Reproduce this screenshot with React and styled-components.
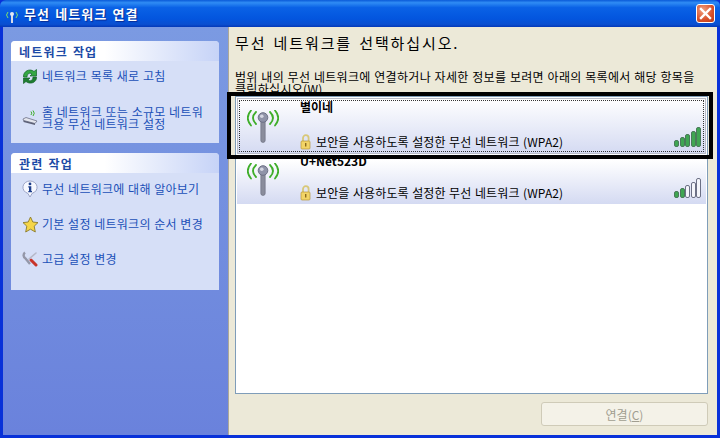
import React from "react";
import styled, { createGlobalStyle } from "styled-components";

const GlobalStyle = createGlobalStyle`
  html, body {
    margin: 0;
    padding: 0;
    background: #0831d9;
  }
  * {
    box-sizing: border-box;
  }
`;

const font = `"Noto Sans CJK KR", "Liberation Sans", sans-serif`;

const networks = [
  { id: "star", name: "별이네", level: 5, selected: true },
  { id: "unet", name: "U+Net523D", level: 2, selected: false },
];

const AntennaIcon = () => (
  <svg width="32" height="33" viewBox="0 0 32 33">
    <g fill="none" stroke="#3fae2a" strokeWidth="1.8" strokeLinecap="round">
      <path d="M9 2 Q3 8 9 14" />
      <path d="M4 0.5 Q-2.5 8 4 15.5" />
      <path d="M23 2 Q29 8 23 14" />
      <path d="M28 0.5 Q34.5 8 28 15.5" />
    </g>
    <rect x="13.8" y="9" width="4.4" height="23.5" rx="2.2" fill="#8a8d9c" stroke="#666a7c" strokeWidth="0.6" />
    <circle cx="16" cy="7.5" r="4.8" fill="#8f93a8" stroke="#6c7085" />
    <circle cx="14.8" cy="6.2" r="1.8" fill="#d4d6e2" />
  </svg>
);

const LockIcon = () => (
  <svg width="11" height="16" viewBox="0 0 11 16">
    <path d="M3 7 V4 a2.8 2.8 0 0 1 5.6 0 V7" fill="none" stroke="#d8c878" strokeWidth="1.8" />
    <rect x="1" y="7" width="9" height="8" rx="1" fill="#f2d466" stroke="#b8963a" strokeWidth="0.7" />
    <rect x="5" y="9" width="1.4" height="3.5" fill="#8a6a1e" />
  </svg>
);

const RefreshIcon = () => (
  <svg width="16" height="17" viewBox="0 0 16 17">
    <path d="M1.5 9 C1 3 8 0 12 3.5 L14.5 1.5 V8 H8 L10 6 C7.5 4 5 6 5 9 Z" fill="#34a844" stroke="#14622a" strokeWidth="0.7" />
    <path d="M14.5 9 C15 14.5 8 17 4 13.5 L1.5 15.5 V10 H8 L6 12 C8.5 14 11 12 11 9 Z" fill="#1d7d30" stroke="#14622a" strokeWidth="0.7" />
  </svg>
);

const HomeWirelessIcon = () => (
  <svg width="17" height="16" viewBox="0 0 17 16">
    <path d="M9 5 Q10.5 3.2 9 1.5" fill="none" stroke="#3fae2a" strokeWidth="1" />
    <path d="M11 6 Q13.5 3.2 11 0.5" fill="none" stroke="#3fae2a" strokeWidth="1" />
    <path d="M1 9 L4 7.5 L15 11 L13 13.5 L1.5 10.5 Z" fill="#e4e6ee" stroke="#6c7085" strokeWidth="0.8" />
    <path d="M1.5 10.5 L13 13.5 L13 15 L1.5 12 Z" fill="#5c6076" />
  </svg>
);

const InfoIcon = () => (
  <svg width="16" height="18" viewBox="0 0 16 18">
    <path d="M8 1 a7 6.3 0 0 0 -2.2 12.3 L8 17 L10.2 13.3 A7 6.3 0 0 0 8 1 Z" fill="#f6f8ff" stroke="#8a93b8" strokeWidth="0.8" />
    <circle cx="8" cy="3.9" r="1.4" fill="#1e3f8c" />
    <path d="M6.3 6.2 H9.3 V11 H10 V12.2 H6.3 V11 H7 V7.4 H6.3 Z" fill="#1e3f8c" />
  </svg>
);

const StarIcon = () => (
  <svg width="17" height="17" viewBox="0 0 17 17">
    <path d="M8.5 1 L10.8 6 L16 6.6 L12.2 10.2 L13.3 16 L8.5 13.2 L3.7 16 L4.8 10.2 L1 6.6 L6.2 6 Z" fill="#f5d548" stroke="#8a7a2a" strokeWidth="0.9" />
  </svg>
);

const ToolIcon = () => (
  <svg width="17" height="16" viewBox="0 0 17 16">
    <path d="M9 9 L14 14" stroke="#c8342a" strokeWidth="3" strokeLinecap="round" />
    <path d="M3 1.5 a3.6 3.6 0 0 0 0.5 6 L8 13" fill="none" stroke="#9497a8" strokeWidth="2.4" />
    <path d="M7 8 L14 2" stroke="#b6b9c8" strokeWidth="1.6" strokeLinecap="round" />
  </svg>
);

const SignalBars = ({ level }) => (
  <Bars>
    {[7, 10, 13, 16, 20].map((height, index) => (
      <Bar key={height} $height={height} $on={index < level} />
    ))}
  </Bars>
);

const App = () => {
  return (
    <Window>
      <GlobalStyle />
      <TitleBar>
        <TitleIcon>
          <svg width="16" height="16" viewBox="0 0 16 16">
            <g fill="none" stroke="#7fe06a" strokeWidth="1">
              <path d="M4 3 Q1 6 4 9" />
              <path d="M12 3 Q15 6 12 9" />
            </g>
            <rect x="7" y="5" width="2" height="9" fill="#d8dce8" />
            <circle cx="8" cy="5" r="2" fill="#e4e8f2" />
          </svg>
        </TitleIcon>
        <Title>무선 네트워크 연결</Title>
        <CloseButton>
          <svg width="13" height="13" viewBox="0 0 13 13">
            <path d="M2 2 L11 11 M11 2 L2 11" stroke="#fff" strokeWidth="2.4" strokeLinecap="square" />
          </svg>
        </CloseButton>
      </TitleBar>
      <Body>
        <Sidebar>
          <TaskGroup $height={102}>
            <GroupHeader>네트워크 작업</GroupHeader>
            <TaskList $gap={21} $top={6}>
              <Task>
                <TaskIcon><RefreshIcon /></TaskIcon>
                <TaskLabel>네트워크 목록 새로 고침</TaskLabel>
              </Task>
              <Task>
                <TaskIcon><HomeWirelessIcon /></TaskIcon>
                <TaskLabel>홈 네트워크 또는 소규모 네트워크용 무선 네트워크 설정</TaskLabel>
              </Task>
            </TaskList>
          </TaskGroup>
          <TaskGroup $height={137}>
            <GroupHeader>관련 작업</GroupHeader>
            <TaskList $gap={17} $top={7}>
              <Task>
                <TaskIcon><InfoIcon /></TaskIcon>
                <TaskLabel>무선 네트워크에 대해 알아보기</TaskLabel>
              </Task>
              <Task>
                <TaskIcon><StarIcon /></TaskIcon>
                <TaskLabel>기본 설정 네트워크의 순서 변경</TaskLabel>
              </Task>
              <Task>
                <TaskIcon><ToolIcon /></TaskIcon>
                <TaskLabel>고급 설정 변경</TaskLabel>
              </Task>
            </TaskList>
          </TaskGroup>
        </Sidebar>
        <Main>
          <Heading>무선 네트워크를 선택하십시오.</Heading>
          <Description>
            범위 내의 무선 네트워크에 연결하거나 자세한 정보를 보려면 아래의 목록에서 해당 항목을
            <br />
            클릭하십시오(W).
          </Description>
          <NetworkList>
            <Highlight />
            {networks.map((network) => (
              <NetworkRow key={network.id} $selected={network.selected}>
                <AntennaSlot $selected={network.selected}><AntennaIcon /></AntennaSlot>
                <NetworkInfo>
                  <NetworkName $selected={network.selected}>{network.name}</NetworkName>
                  <NetworkStatus>
                    <LockIcon />
                    <span>보안을 사용하도록 설정한 무선 네트워크 (WPA2)</span>
                  </NetworkStatus>
                </NetworkInfo>
                <SignalBars level={network.level} />
              </NetworkRow>
            ))}
          </NetworkList>
          <Footer>
            <ConnectButton disabled>연결(<u>C</u>)</ConnectButton>
          </Footer>
        </Main>
      </Body>
    </Window>
  );
};

const Window = styled.div`
  width: 720px;
  height: 438px;
  display: flex;
  flex-direction: column;
  overflow: hidden;
  background: #0831d9;
  font-family: ${font};
`;

const TitleBar = styled.div`
  height: 27px;
  flex: none;
  display: flex;
  align-items: center;
  padding: 0 5px 0 4px;
  border-radius: 6px 6px 0 0;
  background: linear-gradient(180deg, #0a5ad8 0%, #2f8cf4 10%, #0a62e6 28%, #0355de 70%, #0a4fd0 90%, #0338b8 100%);
`;

const TitleIcon = styled.div`
  width: 17px;
  height: 16px;
  margin-right: 3px;
`;

const Title = styled.div`
  flex: 1;
  color: #fff;
  font-size: 13px;
  font-weight: 700;
  letter-spacing: 1.1px;
  word-spacing: 1px;
  text-shadow: 1px 1px 1px #0a2a90;
`;

const CloseButton = styled.div`
  width: 19px;
  height: 19px;
  display: flex;
  align-items: center;
  justify-content: center;
  border: 1px solid #fff;
  border-radius: 3px;
  background: radial-gradient(circle at 35% 30%, #f0a080, #d8502a 60%, #b83a18);
`;

const Body = styled.div`
  flex: 1;
  display: flex;
  margin: 0 3px 3px 3px;
  min-height: 0;
`;

const Sidebar = styled.div`
  width: 225px;
  flex: none;
  display: flex;
  flex-direction: column;
  gap: 10px;
  padding: 14px 9px 0 8px;
  background: linear-gradient(180deg, #7b9ae2 0%, #6a82dc 100%);
`;

const TaskGroup = styled.section`
  height: ${(p) => p.$height}px;
  border-radius: 4px 4px 0 0;
  background: #d6dff7;
`;

const GroupHeader = styled.div`
  height: 20px;
  display: flex;
  align-items: center;
  padding-left: 8px;
  border-radius: 4px 4px 0 0;
  background: linear-gradient(90deg, #fff 0%, #fff 45%, #c6d3f7 100%);
  color: #1c4aa6;
  font-size: 12px;
  font-weight: 700;
  letter-spacing: 1.2px;
  word-spacing: 1px;
`;

const TaskList = styled.div`
  display: flex;
  flex-direction: column;
  gap: ${(p) => p.$gap}px;
  padding: ${(p) => p.$top}px 8px 0 10px;
`;

const Task = styled.div`
  display: flex;
  align-items: center;
  gap: 3px;
`;

const TaskIcon = styled.div`
  width: 18px;
  height: 18px;
  flex: none;
  display: flex;
  align-items: center;
  justify-content: center;
`;

const TaskLabel = styled.div`
  max-width: 166px;
  color: #2050b8;
  font-size: 12px;
  line-height: 12px;
  letter-spacing: 0.25px;
  word-spacing: 0.6px;
  word-break: break-all;
`;

const Main = styled.div`
  flex: 1;
  display: flex;
  flex-direction: column;
  padding: 0 9px 0 6px;
  border-left: 1px solid #aca899;
  background: #ece9d8;
`;

const Heading = styled.h1`
  margin: 6px 0 0 0;
  height: 20px;
  font-size: 15px;
  line-height: 20px;
  font-weight: 400;
  letter-spacing: 1.88px;
  word-spacing: 2px;
  color: #000;
`;

const Description = styled.p`
  margin: 18px 0 0 0;
  height: 24px;
  font-size: 12px;
  line-height: 12px;
  letter-spacing: 0.31px;
  word-spacing: 0.6px;
  color: #000;
  white-space: nowrap;
`;

const NetworkList = styled.div`
  position: relative;
  height: 298px;
  margin-top: 1px;
  padding: 1px;
  border: 1px solid #7f9db9;
  background: #fff;
`;

const Highlight = styled.div`
  position: absolute;
  top: -5px;
  left: -9px;
  right: -6px;
  height: 67px;
  border: 4px solid #000;
  z-index: 2;
  pointer-events: none;
`;

const NetworkRow = styled.div`
  height: ${(p) => (p.$selected ? 56 : 44)}px;
  margin-bottom: ${(p) => (p.$selected ? 6 : 0)}px;
  display: flex;
  align-items: stretch;
  padding: ${(p) => (p.$selected ? "3px 5px 4px 8px" : "0 5px 3px 8px")};
  background: linear-gradient(180deg, #fff 0%, #d4daf2 100%);
  box-shadow: ${(p) => (p.$selected ? "inset 0 0 0 1px #b8bcc8" : "none")};
  outline: ${(p) => (p.$selected ? "1px dotted #333" : "none")};
  outline-offset: -3px;
`;

const AntennaSlot = styled.div`
  width: 55px;
  flex: none;
  padding: ${(p) => (p.$selected ? 9 : 3)}px 0 0 2px;
`;

const NetworkInfo = styled.div`
  flex: 1;
  display: flex;
  flex-direction: column;
  justify-content: space-between;
`;

const NetworkName = styled.div`
  margin-top: ${(p) => (p.$selected ? 0 : -5)}px;
  font-size: 12px;
  line-height: 12px;
  font-weight: 700;
  color: #000;
`;

const NetworkStatus = styled.div`
  display: flex;
  align-items: center;
  gap: 5px;
  font-size: 12px;
  line-height: 16px;
  letter-spacing: 0.13px;
  word-spacing: 0.6px;
  color: #000;
`;

const Bars = styled.div`
  align-self: flex-end;
  display: flex;
  align-items: flex-end;
  gap: 0.5px;
  height: 20px;
  margin-bottom: 3px;
`;

const Bar = styled.div`
  width: 5px;
  height: ${(p) => p.$height}px;
  border-radius: 2px;
  border: 1px solid ${(p) => (p.$on ? "#4a7a5a" : "#6c7085")};
  background: ${(p) => (p.$on ? "#3fa652" : "#f4f5fa")};
`;

const Footer = styled.div`
  display: flex;
  justify-content: flex-end;
  padding-top: 8px;
`;

const ConnectButton = styled.button`
  width: 167px;
  height: 24px;
  padding: 0;
  border: 1px solid #cfcbb8;
  border-radius: 3px;
  background: #f4f2e8;
  color: #a19e90;
  font-family: ${font};
  font-size: 12px;
`;

export default App;
